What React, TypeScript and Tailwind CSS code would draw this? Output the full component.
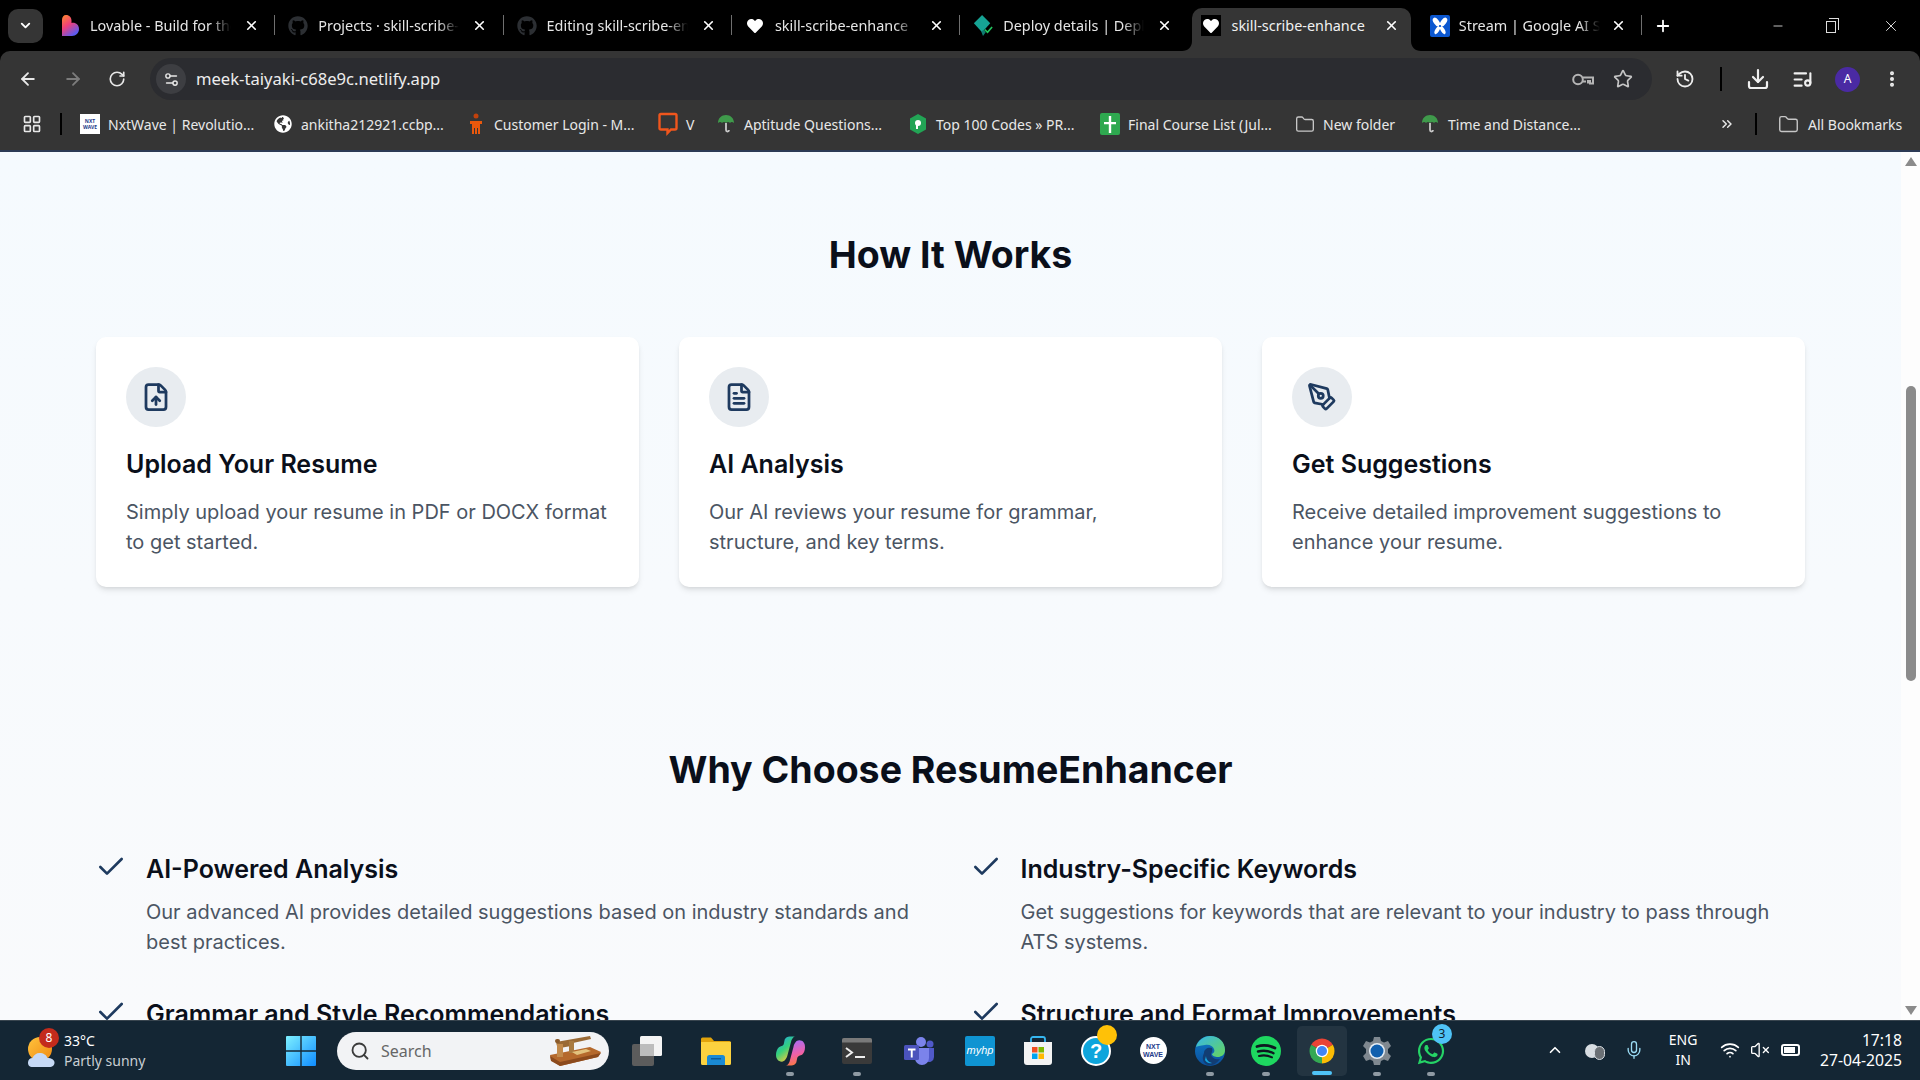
import { ArrowLeft, ArrowRight, Check, ChevronDown, ChevronUp, ChevronsRight, Download, FileText, FileUp, Folder, History, LayoutGrid, ListMusic, Mic, Minus, MoreVertical, PenTool, Plus, RotateCw, Search, Settings2, Star, VolumeX, Wifi, X } from "lucide-react";
import { FaGithub, FaGlobeAmericas, FaHeart, FaWhatsapp } from "react-icons/fa";
import type { ReactNode } from "react";

const LovableIcon = () => (
    <svg viewBox="0 0 20 24" className="w-[20px] h-[24px]">
        <defs>
            <linearGradient id="lov" x1="0" y1="0" x2="0.6" y2="1">
                <stop offset="0" stopColor="#ff8a2b"/>
                <stop offset="0.5" stopColor="#f0407a"/>
                <stop offset="1" stopColor="#5b5bf0"/>
            </linearGradient>
        </defs>
        <path d="M6 1c3.5 0 5.5 2.5 5.5 5.5V9c4-.8 7.5 1.800 7.500 6 0 4-3 7-7 7H2V6c0-3 1.500-5 4-5z" fill="url(#lov)"/>
    </svg>
);

const DeployIcon = () => (
    <svg viewBox="0 0 22 26" className="w-[22px] h-[26px]">
        <path d="M10 1l9 9-9 10-9-10z" fill="#16a394"/>
        <path d="M9 19l3-2 2 3-3 4z" fill="#0e7d71"/>
        <path d="M13 17l3 3 5-6" fill="none" stroke="#22c55e" strokeWidth="1.800"/>
    </svg>
);

const StudioIcon = () => (
    <span className="w-[20px] h-[22px] rounded-[2px] bg-[#0b57d0] flex items-center justify-center">
        <svg viewBox="0 0 20 22" className="w-[18px] h-[20px]">
            <ellipse cx="6" cy="6.500" rx="3" ry="5.500" transform="rotate(-35 6 6.500)" fill="#fff"/>
            <ellipse cx="14" cy="6.500" rx="3" ry="5.500" transform="rotate(35 14 6.500)" fill="#fff"/>
            <ellipse cx="7" cy="15.500" rx="2.200" ry="5" transform="rotate(30 7 15.500)" fill="#fff"/>
            <ellipse cx="13" cy="15.500" rx="2.200" ry="5" transform="rotate(-30 13 15.500)" fill="#fff"/>
            <circle cx="10" cy="11" r="1.200" fill="#0b57d0"/>
        </svg>
    </span>
);

const tabs = [
    {title: "Lovable - Build for the web", icon: <LovableIcon/>, sep: true},
    {title: "Projects · skill-scribe-enhance", icon: <FaGithub className="w-[20px] h-[20px] text-[#2c2f33]"/>, sep: true},
    {title: "Editing skill-scribe-enhance", icon: <FaGithub className="w-[20px] h-[20px] text-[#2c2f33]"/>, sep: true},
    {title: "skill-scribe-enhance", icon: <FaHeart className="w-[16px] h-[16px] text-white"/>, sep: true},
    {title: "Deploy details | Deploys", icon: <DeployIcon/>, sep: false},
];

function Tab({title, icon, sep}: { title: string; icon: ReactNode; sep?: boolean }) {
    return (
        <div className="relative w-[228.3px] h-full flex items-center pl-[13px] shrink-0">
            <span className="w-[20px] flex items-center justify-center">{icon}</span>
            <span className="ml-[10px] w-[141px] whitespace-nowrap overflow-hidden text-[14.4px] text-[#e6e6e6] [mask-image:linear-gradient(to_right,black_85%,transparent)]">{title}</span>
            <X className="ml-[13px] w-[15px] h-[15px] text-white" strokeWidth={2.6}/>
            {sep && <span className="absolute right-0 top-[15px] h-[20px] w-px bg-[#6f6f6f]"/>}
        </div>
    );
}

function TabStrip() {
    return (
        <div className="h-[51px] bg-black flex items-center pl-[8px] shrink-0">
            <div className="w-[35px] h-[34px] rounded-[10px] bg-[#353535] flex items-center justify-center mr-[4px]">
                <ChevronDown className="w-[15px] h-[15px] text-white" strokeWidth={3}/>
            </div>
            {tabs.map((t) => <Tab key={t.title} {...t}/>)}
            {/* active tab with flared corners */}
            <div className="relative ml-[4px] mr-[5.3px] w-[219px] h-[43px] self-end bg-[#353535] rounded-t-[10px] flex items-center pl-[9px] pb-[8px] shrink-0">
                <svg viewBox="0 0 10 10" className="absolute -left-[10px] bottom-0 w-[10px] h-[10px]"><path d="M10 0v10H0c6 0 10-4 10-10z" fill="#353535"/></svg>
                <svg viewBox="0 0 10 10" className="absolute -right-[10px] bottom-0 w-[10px] h-[10px]"><path d="M0 0v10h10C4 10 0 6 0 0z" fill="#353535"/></svg>
                <span className="w-[20px] h-[21px] bg-black flex items-center justify-center"><FaHeart className="w-[16px] h-[16px] text-white"/></span>
                <span className="ml-[10px] w-[141px] whitespace-nowrap overflow-hidden text-[14.4px] text-[#f1f1f1]">skill-scribe-enhance</span>
                <X className="ml-[12px] w-[15px] h-[15px] text-white" strokeWidth={2.6}/>
            </div>
            <div className="relative w-[225px] h-full flex items-center pl-[13px] shrink-0">
                <StudioIcon/>
                <span className="ml-[9px] w-[141px] whitespace-nowrap overflow-hidden text-[14.4px] text-[#e6e6e6] [mask-image:linear-gradient(to_right,black_85%,transparent)]">Stream | Google AI Studio</span>
                <X className="ml-[11px] w-[15px] h-[15px] text-white" strokeWidth={2.6}/>
                <span className="absolute right-0 top-[15px] h-[20px] w-px bg-[#6f6f6f]"/>
            </div>
            <Plus className="ml-[12px] w-[18px] h-[18px] text-white" strokeWidth={2.4}/>
            <div className="ml-auto flex items-center text-[#dddddd]">
                <Minus className="w-[14px] h-[14px]" strokeWidth={1.500}/>
                <span className="ml-[41px] relative w-[13px] h-[15px]">
                    <span className="absolute left-0 bottom-0 w-[10px] h-[12px] border border-[#dddddd]"/>
                    <span className="absolute right-0 top-0 w-[10px] h-[12px] border-t border-r border-[#dddddd]"/>
                </span>
                <X className="ml-[43px] mr-[20px] w-[18px] h-[18px]" strokeWidth={1.300}/>
            </div>
        </div>
    );
}

const KeyIcon = () => (
    <svg viewBox="0 0 22 13" className="ml-auto w-[22px] h-[13px]" fill="none" stroke="#b5b5b5" strokeWidth="2">
        <circle cx="6" cy="6.500" r="4.800"/>
        <path d="M11 4.500h10v6h-3V8h-2v2.500M11 8.500h3"/>
    </svg>
);

function Toolbar() {
    return (
        <div className="h-[49px] pt-[7px] flex items-center shrink-0">
            <ArrowLeft className="ml-[18px] w-[20px] h-[20px] text-[#e8e8e8]" strokeWidth={2.2}/>
            <ArrowRight className="ml-[25px] w-[20px] h-[20px] text-[#7c7c7c]" strokeWidth={2.2}/>
            <RotateCw className="ml-[25px] w-[18px] h-[18px] text-[#e8e8e8]" strokeWidth={2.2}/>
            <div className="ml-[24px] w-[1502px] h-[42px] rounded-full bg-[#2b2c30] flex items-center pl-[6px]">
                <span className="w-[30px] h-[30px] rounded-full bg-[#3d3e42] flex items-center justify-center">
                    <Settings2 className="w-[17px] h-[17px] text-[#e8e8e8]"/>
                </span>
                <span className="ml-[10px] text-[16.6px] text-[#ededed]">meek-taiyaki-c68e9c.netlify.app</span>
                <KeyIcon/>
                <Star className="ml-[19px] mr-[19px] w-[20px] h-[20px] text-[#c5c5c5]" strokeWidth={2}/>
            </div>
            <History className="ml-[23px] w-[20px] h-[20px] text-[#ededed]" strokeWidth={2.2}/>
            <span className="ml-[25px] w-[2px] h-[24px] bg-black"/>
            <Download className="ml-[24px] w-[24px] h-[24px] text-[#f0f0f0]" strokeWidth={2.2}/>
            <ListMusic className="ml-[22px] w-[21px] h-[21px] text-[#f0f0f0]" strokeWidth={2.4}/>
            <span className="ml-[22px] w-[25px] h-[25px] rounded-full bg-[#4a2aa3] flex items-center justify-center text-[12px] text-white">A</span>
            <MoreVertical className="ml-[22px] w-[20px] h-[20px] text-[#f0f0f0]" strokeWidth={2.8}/>
        </div>
    );
}

const Umbrella = () => (
    <svg viewBox="0 0 18 20" className="w-[18px] h-[20px]">
        <path d="M1 9c0-5 3.500-8 8-8s8 3 8 8c-1.500-1.200-3-1.200-4 0-1-1.200-3-1.200-4 0-1-1.200-3-1.200-4 0-1-1.200-2.500-1.200-4 0z" fill="#3f9a4b"/>
        <path d="M9 9v7c0 2 3 2 3 0" fill="none" stroke="#c9c9c9" strokeWidth="1.800"/>
    </svg>
);

const bookmarks = [
    {
        label: "NxtWave | Revolutio...", width: "w-[193px]",
        icon: <span className="w-[20px] h-[20px] bg-white flex flex-col items-center justify-center text-[5px] leading-[6px] font-bold text-[#1e3a8a]"><span>NXT</span><span>WAVE</span></span>,
    },
    {label: "ankitha212921.ccbp...", width: "w-[193px]", icon: <FaGlobeAmericas className="w-[18px] h-[18px] text-white"/>},
    {
        label: "Customer Login - M...", width: "w-[192px]",
        icon: <svg viewBox="0 0 18 22" className="w-[18px] h-[22px]"><circle cx="9" cy="3" r="2.500" fill="#c2410c"/><path d="M3 8h12v3h-2v10h-2v-6h-1v6H8v-6H7v6H5V11H3z" fill="#ea580c"/></svg>,
    },
    {
        label: "V", width: "w-[58px]",
        icon: <svg viewBox="0 0 20 24" className="w-[20px] h-[24px]"><path d="M3 2h14a1.500 1.500 0 0 1 1.500 1.500V16a1.500 1.500 0 0 1-1.500 1.500h-4L9.500 21V17.500H3A1.500 1.500 0 0 1 1.500 16V3.500A1.500 1.500 0 0 1 3 2z" fill="none" stroke="#f0561d" strokeWidth="2.400"/></svg>,
    },
    {label: "Aptitude Questions...", width: "w-[192px]", icon: <Umbrella/>},
    {
        label: "Top 100 Codes » PR...", width: "w-[192px]",
        icon: <svg viewBox="0 0 18 22" className="w-[18px] h-[22px]"><path d="M9 1l8 4.500v11L9 21l-8-4.500v-11z" fill="#22a455"/><circle cx="9" cy="10" r="3" fill="#fff"/><path d="M7 9h2v7H7z" fill="#fff"/></svg>,
    },
    {
        label: "Final Course List (Jul...", width: "w-[195px]",
        icon: <span className="w-[20px] h-[22px] bg-[#2ea84f] rounded-[2px] flex items-center justify-center"><svg viewBox="0 0 20 22" className="w-[20px] h-[22px]"><path d="M8.800 3h2.400v6H16v2.200h-4.800V20H8.800v-8.800H4V9h4.800z" fill="#fff"/></svg></span>,
    },
    {label: "New folder", width: "w-[125px]", icon: <Folder className="w-[21px] h-[21px] text-[#c7c7c7]" strokeWidth={1.600}/>},
    {label: "Time and Distance...", width: "w-[198px]", icon: <Umbrella/>},
];

function BookmarksBar() {
    return (
        <div className="h-[50px] pb-[2px] flex items-center shrink-0 text-[14px] text-[#e8e8e8]">
            <LayoutGrid className="ml-[22px] w-[20px] h-[20px] text-[#e8e8e8]" strokeWidth={2}/>
            <span className="ml-[18px] w-[2px] h-[22px] bg-black"/>
            <div className="ml-[18px] flex items-center">
                {bookmarks.map((b) => (
                    <div key={b.label} className={`${b.width} flex items-center gap-[8px] whitespace-nowrap`}>
                        <span className="w-[20px] flex items-center justify-center shrink-0">{b.icon}</span>
                        <span>{b.label}</span>
                    </div>
                ))}
            </div>
            <ChevronsRight className="ml-[101px] w-[16px] h-[16px] text-[#e8e8e8]" strokeWidth={2.2}/>
            <span className="ml-[20px] w-[2px] h-[22px] bg-black"/>
            <Folder className="ml-[21px] w-[21px] h-[21px] text-[#c7c7c7]" strokeWidth={1.600}/>
            <span className="ml-[9px] whitespace-nowrap">All Bookmarks</span>
        </div>
    );
}

const steps = [
    {title: "Upload Your Resume", text: "Simply upload your resume in PDF or DOCX format to get started.", Icon: FileUp},
    {title: "AI Analysis", text: "Our AI reviews your resume for grammar, structure, and key terms.", Icon: FileText},
    {title: "Get Suggestions", text: "Receive detailed improvement suggestions to enhance your resume.", Icon: PenTool},
];

const features = [
    {title: "AI-Powered Analysis", text: "Our advanced AI provides detailed suggestions based on industry standards and best practices."},
    {title: "Industry-Specific Keywords", text: "Get suggestions for keywords that are relevant to your industry to pass through ATS systems."},
    {title: "Grammar and Style Recommendations", text: "Improve your writing with grammar and style recommendations tailored to your resume."},
    {title: "Structure and Format Improvements", text: "Learn how to structure and format your resume for the best possible impression."},
];

function Page() {
    return (
        <div className="flex-1 min-w-0 h-full overflow-hidden bg-gradient-to-b from-[#f5fafe] to-[#f9fafc] px-[96px] pt-[78px] font-['Inter',sans-serif]">
            <h2 className="text-center text-[37.5px] leading-[50px] font-bold text-[#0a0f1a]">How It Works</h2>
            <div className="mt-[57px] grid grid-cols-3 gap-[40px]">
                {steps.map(({title, text, Icon}) => (
                    <div key={title} className="bg-white rounded-[10px] shadow-md p-[30px]">
                        <div className="w-[60px] h-[60px] rounded-full bg-[#e8ecf0] flex items-center justify-center">
                            <Icon className="w-[30px] h-[30px] text-[#1e3a5f]" strokeWidth={2.2}/>
                        </div>
                        <h3 className="mt-[20px] text-[25px] leading-[35px] font-semibold text-[#0a0f1a]">{title}</h3>
                        <p className="mt-[15px] text-[20px] leading-[30px] text-[#4b5563]">{text}</p>
                    </div>
                ))}
            </div>
            <h2 className="mt-[158px] text-center text-[37.5px] leading-[50px] font-bold text-[#0a0f1a]">Why Choose ResumeEnhancer</h2>
            <div className="mt-[55px] grid grid-cols-2 gap-x-[40px] gap-y-[38px]">
                {features.map((f) => (
                    <div key={f.title} className="flex">
                        <Check className="mt-[1px] -ml-px w-[32px] h-[32px] shrink-0 text-[#1e3a5f]" strokeWidth={2}/>
                        <div className="ml-[19px] pt-[2px]">
                            <h3 className="text-[25px] leading-[35px] font-semibold text-[#0a0f1a]">{f.title}</h3>
                            <p className="mt-[10px] text-[20px] leading-[30px] text-[#4b5563]">{f.text}</p>
                        </div>
                    </div>
                ))}
            </div>
        </div>
    );
}

function Scrollbar() {
    return (
        <div className="w-[19px] h-full bg-[#fdfdfd] flex flex-col items-center shrink-0">
            <span className="mt-[5px] w-0 h-0 border-x-[6px] border-x-transparent border-b-[9px] border-b-[#8b8b8b]"/>
            <span className="mt-[220px] w-[10px] h-[295px] rounded-full bg-[#8b8b8b]"/>
            <span className="mt-auto mb-[5px] w-0 h-0 border-x-[6px] border-x-transparent border-t-[9px] border-t-[#8b8b8b]"/>
        </div>
    );
}

const WeatherIcon = () => (
    <svg viewBox="0 0 30 34" className="w-[30px] h-[34px]">
        <defs>
            <linearGradient id="sun" x1="0" y1="0" x2="1" y2="1"><stop offset="0" stopColor="#ffc33d"/><stop offset="1" stopColor="#f08a12"/></linearGradient>
        </defs>
        <circle cx="14" cy="14" r="12" fill="url(#sun)"/>
        <path d="M7 32c-4 0-5-2-5-4.500s2-4.500 4.500-4.500c1-3 4-5 7-5 4 0 7 2 8 5 4 0 7 2 7 4.500S27 32 23 32z" fill="#c6d9f5"/>
    </svg>
);

const WinLogo = () => (
    <svg viewBox="0 0 30 30" className="w-[30px] h-[30px]">
        <defs>
            <linearGradient id="winl" x1="0" y1="0" x2="1" y2="1"><stop offset="0" stopColor="#7ef0ff"/><stop offset="1" stopColor="#0f8cff"/></linearGradient>
        </defs>
        <path d="M0 1a1 1 0 0 1 1-1h13.300v14.300H0zM15.700 0H29a1 1 0 0 1 1 1v13.300H15.700zM0 15.700h14.300V30H1a1 1 0 0 1-1-1zM15.700 15.700H30V29a1 1 0 0 1-1 1H15.700z" fill="url(#winl)"/>
    </svg>
);

// decoration in the search pill
const SearchArt = () => (
    <svg viewBox="0 0 52 32" className="w-[52px] h-[32px]">
        <path d="M0 20l40-8 11 5-3 5-38 9-9-6z" fill="#b5692c"/>
        <path d="M0 21l10 6 41-9-3 4-38 9-9-5z" fill="#8c4a1c"/>
        <path d="M6 7l34-6 1 3-18 4-2 3-11 2-3-2z" fill="#9a6a35"/>
        <rect x="5" y="4" width="5" height="4" rx="2" fill="#8a5a2a"/>
        <rect x="7" y="9" width="6" height="13" fill="#c28a4b"/>
        <rect x="19" y="6" width="5" height="12" fill="#a97a3f"/>
        <path d="M22 17l14-3 5 2-14 4z" fill="#e2c27d"/>
    </svg>
);

const TaskView = () => (
    <svg viewBox="0 0 30 30" className="w-[30px] h-[30px]">
        <rect x="0" y="8" width="22" height="22" rx="2" fill="#5c5c5c"/>
        <rect x="8" y="0" width="22" height="20" rx="1.500" fill="#f4f4f4"/>
        <rect x="8" y="8" width="14" height="12" fill="#bdbdbd"/>
    </svg>
);

const Explorer = () => (
    <svg viewBox="0 0 30 28" className="w-[30px] h-[28px]">
        <path d="M0 2a1.500 1.500 0 0 1 1.500-1.500H10l3 3.500h15.500A1.500 1.500 0 0 1 30 5.500V10H0z" fill="#e2a40c"/>
        <path d="M0 5h30v21.500a1.500 1.500 0 0 1-1.500 1.500h-27A1.500 1.500 0 0 1 0 26.500z" fill="#fcd23f"/>
        <path d="M6 28v-7.500A2.500 2.500 0 0 1 8.500 18h13a2.500 2.500 0 0 1 2.500 2.500V28z" fill="#1a8ad4"/>
        <rect x="10" y="21" width="10" height="1.500" fill="#0b5a99"/>
    </svg>
);

const Copilot = () => (
    <svg viewBox="0 0 30 30" className="w-[29px] h-[30px]">
        <defs>
            <linearGradient id="cp1" x1="0" y1="0" x2="0.6" y2="1"><stop offset="0" stopColor="#1fa2f0"/><stop offset="0.55" stopColor="#34d07c"/><stop offset="1" stopColor="#f6c83a"/></linearGradient>
            <linearGradient id="cp2" x1="0.4" y1="0" x2="0.6" y2="1"><stop offset="0" stopColor="#a86cf5"/><stop offset="0.55" stopColor="#f060a8"/><stop offset="1" stopColor="#fb7a3c"/></linearGradient>
        </defs>
        <path d="M9 3c1-2 3-3 5-3h6c-2 0-3 2-4 4l-4 15c-1 4-3 7-6 7-4 0-6-3-6-7 0-3 1-6 3-8 2-1 4-1 5-3z" fill="url(#cp1)"/>
        <path d="M21 27c-1 2-3 3-5 3h-6c2 0 3-2 4-4l4-15c1-4 3-7 6-7 4 0 6 3 6 7 0 3-1 6-3 8-2 1-4 1-5 3z" fill="url(#cp2)"/>
    </svg>
);

const Terminal = () => (
    <svg viewBox="0 0 30 26" className="w-[30px] h-[26px]">
        <rect width="30" height="26" rx="2" fill="#3a3a3a"/>
        <path d="M0 2a2 2 0 0 1 2-2h26a2 2 0 0 1 2 2v2.500H0z" fill="#7a7a7a"/>
        <path d="M4 10l6 4.500L4 19" fill="none" stroke="#eee" strokeWidth="2"/>
        <rect x="13" y="18" width="10" height="2" fill="#eee"/>
    </svg>
);

const Teams = () => (
    <svg viewBox="0 0 30 28" className="w-[30px] h-[28px]">
        <circle cx="17" cy="5" r="5" fill="#7b83eb"/>
        <circle cx="26" cy="7" r="3.500" fill="#5059c9"/>
        <path d="M22 11h8v9a5 5 0 0 1-8 4z" fill="#5059c9"/>
        <path d="M9 11h16v10a7 7 0 0 1-14 0z" fill="#7b83eb"/>
        <rect x="0" y="8" width="15" height="15" rx="1.500" fill="#4b53bc"/>
        <path d="M4 11.500h7.500v2H8.700v7H6.800v-7H4z" fill="#fff"/>
    </svg>
);

const Store = () => (
    <svg viewBox="0 0 30 30" className="w-[30px] h-[30px]">
        <path d="M8 6V3a2 2 0 0 1 2-2h10a2 2 0 0 1 2 2v3" fill="none" stroke="#35b6f0" strokeWidth="1.800"/>
        <path d="M1 6h28v20a3 3 0 0 1-3 3H4a3 3 0 0 1-3-3z" fill="#f3f3f3"/>
        <rect x="9" y="11" width="5.500" height="5.500" fill="#f25022"/>
        <rect x="15.500" y="11" width="5.500" height="5.500" fill="#7fba00"/>
        <rect x="9" y="17.500" width="5.500" height="5.500" fill="#00a4ef"/>
        <rect x="15.500" y="17.500" width="5.500" height="5.500" fill="#ffb900"/>
    </svg>
);

const Help = () => (
    <span className="relative w-[30px] h-[30px] flex items-center justify-center">
        <span className="w-[30px] h-[30px] rounded-full bg-[#0ea5dc] border-2 border-white flex items-center justify-center text-[20px] font-bold text-white font-['Liberation_Sans',sans-serif]">?</span>
        <span className="absolute -right-[6px] -top-[11px] w-[20px] h-[20px] rounded-full bg-[#ffc107]"/>
    </span>
);

const Edge = () => (
    <svg viewBox="0 0 30 30" className="w-[30px] h-[30px]">
        <defs>
            <linearGradient id="edg1" x1="0" y1="0" x2="0" y2="1"><stop offset="0" stopColor="#0e7ac8"/><stop offset="1" stopColor="#0b4f9c"/></linearGradient>
            <linearGradient id="edg2" x1="0" y1="0" x2="1" y2="1"><stop offset="0" stopColor="#37b6e8"/><stop offset="1" stopColor="#66d65b"/></linearGradient>
        </defs>
        <circle cx="15" cy="15" r="15" fill="url(#edg1)"/>
        <path d="M1 11C3 4 9 0 15 0c9 0 15 6 15 14 0 5-4 7-7 7-3 0-6-1-6-3 2-1 3-3 2-5-1-3-5-5-9-4-5 1-8 1-9 2z" fill="url(#edg2)"/>
        <path d="M9 17c0-4 4-6 8-5 1 2 0 4-1 6 0 4 5 6 9 5-3 4-7 7-12 6-4-1-7-6-4-12z" fill="#123d73"/>
        <path d="M11 20c0 3 2 6 6 7-3 1-6-1-7-3z" fill="#17a7e0"/>
    </svg>
);

const Spotify = () => (
    <svg viewBox="0 0 30 30" className="w-[30px] h-[30px]">
        <circle cx="15" cy="15" r="15" fill="#1ed760"/>
        <path d="M6 10.500c6-1.800 12-1.300 18 1.500" fill="none" stroke="#0f1720" strokeWidth="2.800" strokeLinecap="round"/>
        <path d="M7 15.500c5-1.300 11-.8 15.500 1.700" fill="none" stroke="#0f1720" strokeWidth="2.400" strokeLinecap="round"/>
        <path d="M8 20c4-1 9-.7 13 1.400" fill="none" stroke="#0f1720" strokeWidth="2" strokeLinecap="round"/>
    </svg>
);

const Chrome = () => (
    <svg viewBox="0 0 48 48" className="w-[30px] h-[30px]">
        <path d="M24 24L41.320 14A20 20 0 0 0 6.680 14z" fill="#ea4335"/>
        <path d="M24 24L6.680 14A20 20 0 0 0 24 44z" fill="#34a853"/>
        <path d="M24 24L24 44A20 20 0 0 0 41.320 14z" fill="#fbbc04"/>
        <circle cx="24" cy="24" r="10" fill="#fff"/>
        <circle cx="24" cy="24" r="8" fill="#4285f4"/>
    </svg>
);

const Gear = () => (
    <span className="relative w-[30px] h-[30px] flex items-center justify-center">
        <svg viewBox="0 0 30 30" className="w-[30px] h-[30px]">
            <path d="M12 1h6l1 4 3 1.500 4-1.500 3 5-3 3v4l3 3-3 5-4-1.500-3 1.500-1 4h-6l-1-4-3-1.500-4 1.500-3-5 3-3v-4l-3-3 3-5 4 1.500L11 5z" fill="#7f8890"/>
            <circle cx="15" cy="15" r="8" fill="#e6eef5"/>
            <circle cx="15" cy="15" r="6.500" fill="#0f5fae"/>
        </svg>
    </span>
);

const apps = [
    {key: "task", icon: <TaskView/>, ml: "ml-[23px]"},
    {key: "explorer", icon: <Explorer/>, ml: "ml-[39px]"},
    {key: "copilot", icon: <Copilot/>, ml: "ml-[44px]", dot: true},
    {key: "terminal", icon: <Terminal/>, ml: "ml-[37px]", dot: true},
    {key: "teams", icon: <Teams/>, ml: "ml-[32px]"},
    {
        key: "hp", ml: "ml-[31px]",
        icon: <span className="w-[30px] h-[30px] rounded-[2px] bg-[#0f94d2] flex items-center justify-center text-[11px] italic text-white font-['Liberation_Sans',sans-serif]">myhp</span>,
    },
    {key: "store", icon: <Store/>, ml: "ml-[28px]"},
    {key: "help", icon: <Help/>, ml: "ml-[28px]"},
    {
        key: "nxt", ml: "ml-[27px]",
        icon: <span className="w-[27px] h-[27px] rounded-full bg-white flex flex-col items-center justify-center text-[7px] leading-[8px] font-bold text-[#1e3a8a] font-['Liberation_Sans',sans-serif]"><span>NXT</span><span>WAVE</span></span>,
    },
    {key: "edge", icon: <Edge/>, ml: "ml-[27px]", dot: true},
    {key: "spotify", icon: <Spotify/>, ml: "ml-[26px]", dot: true},
    {key: "chrome", icon: <Chrome/>, ml: "ml-[26px]", active: true},
    {key: "settings", icon: <Gear/>, ml: "ml-[25px]", dot: true},
    {
        key: "whatsapp", ml: "ml-[24px]", dot: true,
        icon: (
            <span className="relative">
                <FaWhatsapp className="w-[30px] h-[30px] text-[#25d366]"/>
                <span className="absolute -right-[6px] -top-[12px] w-[20px] h-[20px] rounded-full bg-[#4fc3f7] flex items-center justify-center text-[12px] text-[#10202c]">3</span>
            </span>
        ),
    },
];

function Taskbar() {
    return (
        <div className="h-[60px] shrink-0 bg-[#142634] border-t border-[#39454f] flex items-center text-white">
            <div className="w-[286px] flex items-center pl-[26px] shrink-0">
                <span className="relative w-[30px] h-[34px] mt-[3px]">
                    <WeatherIcon/>
                    <span className="absolute left-[13px] -top-[7px] w-[20px] h-[20px] rounded-full bg-[#c42b1c] flex items-center justify-center text-[12px] text-white">8</span>
                </span>
                <div className="ml-[8px] text-[14px] leading-[20px]">
                    <div>33°C</div>
                    <div className="text-[#c8ced3]">Partly sunny</div>
                </div>
            </div>
            <WinLogo/>
            <div className="ml-[21px] w-[272px] h-[38px] rounded-full bg-[#f2f3f5] flex items-center pl-[13px] pr-[7px]">
                <Search className="w-[20px] h-[20px] text-[#3b3b3b]" strokeWidth={2.2}/>
                <span className="ml-[11px] text-[16px] text-[#666666]">Search</span>
                <span className="ml-auto"><SearchArt/></span>
            </div>
            <div className="flex items-center">
                {apps.map((a) => (
                    <div key={a.key} className={`${a.ml} relative w-[30px] h-[30px] flex items-center justify-center shrink-0`}>
                        {a.active && <span className="absolute -left-[10px] -top-[10px] w-[50px] h-[50px] rounded-[5px] bg-[#233441]"/>}
                        <span className="relative flex items-center justify-center">{a.icon}</span>
                        {a.dot && <span className="absolute left-[11px] top-[36px] w-[8px] h-[4px] rounded-full bg-[#8f9aa3]"/>}
                        {a.active && <span className="absolute left-[5px] top-[35px] w-[20px] h-[4px] rounded-full bg-[#4fc3f7]"/>}
                    </div>
                ))}
            </div>
            <div className="ml-auto flex items-center pr-[18px] pb-[1px] text-[14px] text-white">
                <ChevronUp className="w-[18px] h-[18px]" strokeWidth={2.2}/>
                <span className="ml-[21px] relative w-[20px] h-[20px]">
                    <span className="absolute left-0 top-[4px] w-[14px] h-[14px] rounded-full bg-[#d8dde2]"/>
                    <span className="absolute right-0 bottom-0 w-[11px] h-[14px] rounded-full bg-[#6b7075] border border-[#d8dde2]"/>
                </span>
                <Mic className="ml-[19px] w-[20px] h-[20px] text-[#9bdcf5]" strokeWidth={1.600}/>
                <div className="ml-[22px] w-[34px] text-center leading-[20px]">
                    <div>ENG</div>
                    <div>IN</div>
                </div>
                <Wifi className="ml-[20px] w-[20px] h-[20px]" strokeWidth={2}/>
                <VolumeX className="ml-[10px] w-[20px] h-[20px]" strokeWidth={1.600}/>
                <span className="ml-[11px] w-[19px] h-[12px] rounded-[3px] border-2 border-white flex items-center p-px"><span className="w-[11px] h-[6px] bg-white"/></span>
                <div className="ml-[20px] text-right text-[15.7px] leading-[20px]">
                    <div>17:18</div>
                    <div>27-04-2025</div>
                </div>
            </div>
        </div>
    );
}

export default function App() {
    return (
        <div className="h-screen w-full flex flex-col overflow-hidden bg-black font-['Noto_Sans',sans-serif]">
            <TabStrip/>
            <div className="bg-[#353535] rounded-t-[10px] shrink-0">
                <Toolbar/>
                <BookmarksBar/>
                <div className="h-[2px] bg-[#2c3a55]"/>
            </div>
            <div className="flex flex-1 min-h-0">
                <Page/>
                <Scrollbar/>
            </div>
            <Taskbar/>
        </div>
    );
}
